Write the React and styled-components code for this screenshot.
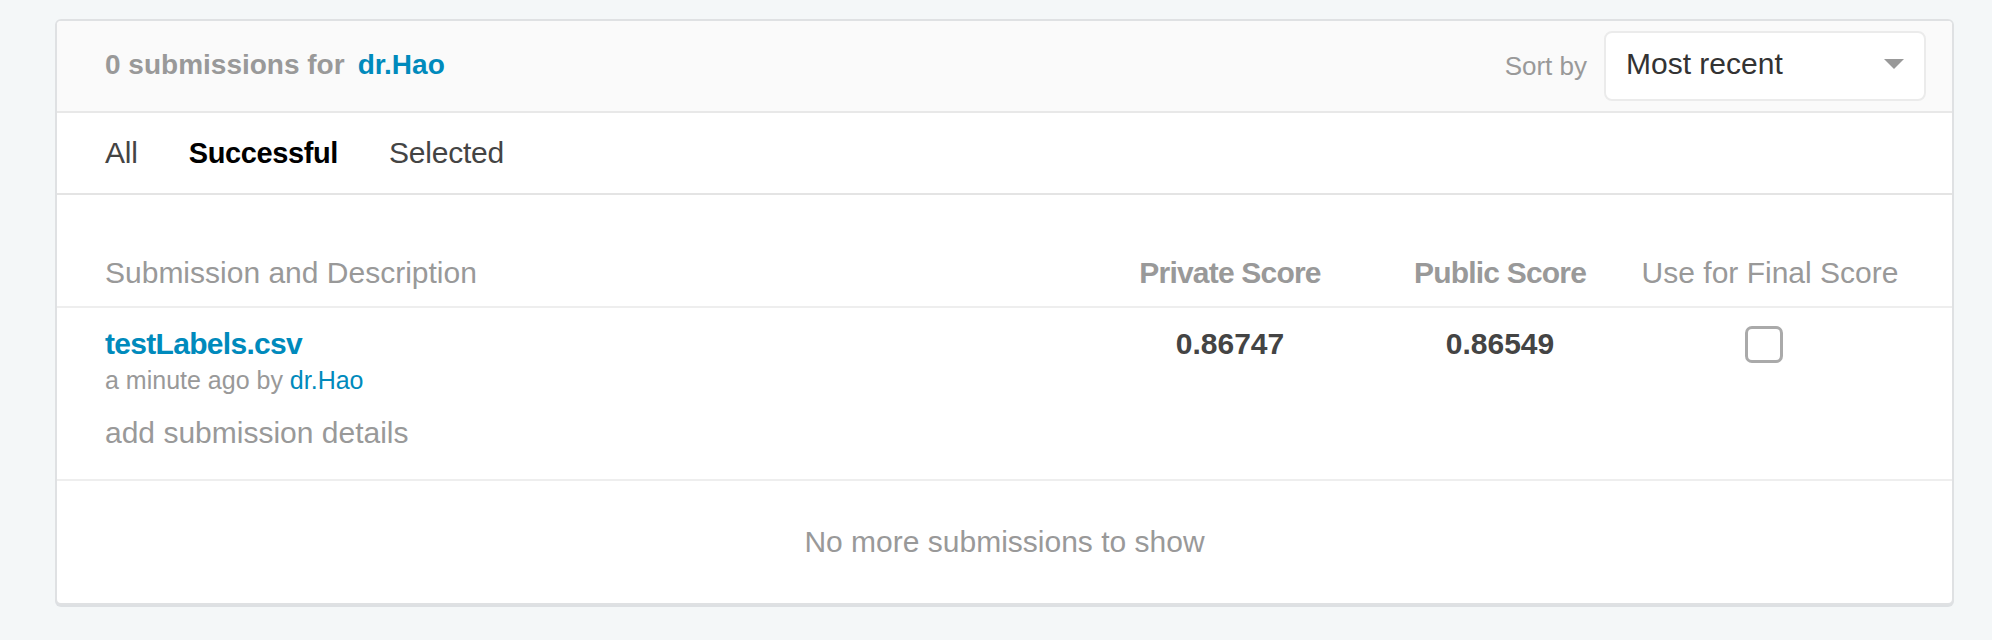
import React from "react";
import styled, { createGlobalStyle } from "styled-components";

const GlobalStyle = createGlobalStyle`
  html, body {
    margin: 0;
    padding: 0;
    background: #f4f7f8;
    font-family: "Liberation Sans", Arial, sans-serif;
  }
`;

const Page = styled.div`
  padding: 19px 38px 34px 55px;
`;

const Card = styled.section`
  background: #ffffff;
  border: 2px solid #dfe1e3;
  border-radius: 6px;
  box-shadow: 0 2px 0 #dde0e3;
  overflow: hidden;
`;

const Header = styled.header`
  display: flex;
  align-items: center;
  justify-content: space-between;
  height: 90px;
  padding: 0 26px 0 48px;
  background: #fafafa;
  border-bottom: 2px solid #e8e8e8;
`;

const Title = styled.h2`
  margin: 0 0 2px;
  font-size: 28px;
  font-weight: 700;
  color: #999999;
`;

const Link = styled.a`
  color: #008abc;
  text-decoration: none;
  font-weight: ${(p) => (p.$bold ? 700 : 400)};
  margin-left: ${(p) => p.$gap || 0}px;
`;

const SortGroup = styled.div`
  display: flex;
  align-items: center;
  gap: 17px;
`;

const SortLabel = styled.span`
  font-size: 26px;
  color: #999999;
`;

const Select = styled.div`
  box-sizing: border-box;
  width: 322px;
  height: 70px;
  display: flex;
  align-items: center;
  justify-content: space-between;
  padding: 0 20px 4px 20px;
  background: #ffffff;
  border: 2px solid #ebebeb;
  border-radius: 8px;
  font-size: 30px;
  color: #333333;
`;

const Tabs = styled.nav`
  display: flex;
  align-items: center;
  gap: 51px;
  height: 80px;
  padding: 0 48px;
  border-bottom: 2px solid #e4e4e4;
`;

const Tab = styled.span`
  font-size: ${(p) => (p.$active ? "29px" : "30px")};
  font-weight: ${(p) => (p.$active ? 700 : 400)};
  letter-spacing: ${(p) => (p.$active ? "-0.4px" : "-0.2px")};
  color: ${(p) => (p.$active ? "#000000" : "#444444")};
`;

const Grid = styled.div`
  display: grid;
  grid-template-columns: 1fr 270px 270px 270px;
  padding: ${(p) => p.$pad};
  border-bottom: 2px solid #eeeeee;
`;

const HeadCell = styled.div`
  font-size: 30px;
  line-height: 36px;
  color: #999999;
  text-align: ${(p) => (p.$center ? "center" : "left")};
  font-weight: ${(p) => (p.$bold ? 700 : 400)};
  letter-spacing: ${(p) => (p.$bold ? "-0.8px" : "0")};
`;

const SubmissionCell = styled.div`
  display: flex;
  flex-direction: column;
`;

const FileName = styled.a`
  font-size: 30px;
  line-height: 36px;
  font-weight: 700;
  letter-spacing: -0.7px;
  color: #008abc;
  text-decoration: none;
`;

const Meta = styled.div`
  margin-top: 3px;
  font-size: 25px;
  line-height: 30px;
  color: #999999;
`;

const Details = styled.div`
  margin-top: 20px;
  font-size: 30px;
  line-height: 36px;
  color: #999999;
`;

const Score = styled.div`
  font-size: 30px;
  line-height: 36px;
  font-weight: 700;
  color: #444444;
  text-align: center;
`;

const CheckCell = styled.div`
  display: flex;
  justify-content: center;
  align-items: center;
  height: 36px;
  padding-right: 12px;
`;

const Checkbox = styled.span`
  box-sizing: border-box;
  width: 38px;
  height: 37px;
  border: 3px solid #aaaaaa;
  border-radius: 7px;
  background: #ffffff;
`;

const Footer = styled.div`
  height: 122px;
  display: flex;
  align-items: center;
  justify-content: center;
  font-size: 30px;
  color: #999999;
`;

const Caret = () => (
  <svg width="20" height="10" viewBox="0 0 20 10" aria-hidden="true">
    <polygon points="0,0 20,0 10,10" fill="#999999" />
  </svg>
);

export default function App() {
  return (
    <>
      <GlobalStyle />
      <Page>
        <Card>
          <Header>
            <Title>
              0 submissions for
              <Link $bold $gap={13}>dr.Hao</Link>
            </Title>
            <SortGroup>
              <SortLabel>Sort by</SortLabel>
              <Select>
                <span>Most recent</span>
                <Caret />
              </Select>
            </SortGroup>
          </Header>
          <Tabs>
            <Tab>All</Tab>
            <Tab $active>Successful</Tab>
            <Tab>Selected</Tab>
          </Tabs>
          <Grid $pad="60px 47px 15px 48px">
            <HeadCell>Submission and Description</HeadCell>
            <HeadCell $center $bold>Private Score</HeadCell>
            <HeadCell $center $bold>Public Score</HeadCell>
            <HeadCell $center>Use for Final Score</HeadCell>
          </Grid>
          <Grid $pad="18px 47px 28px 48px">
            <SubmissionCell>
              <FileName>testLabels.csv</FileName>
              <Meta>
                a minute ago by <Link>dr.Hao</Link>
              </Meta>
              <Details>add submission details</Details>
            </SubmissionCell>
            <Score>0.86747</Score>
            <Score>0.86549</Score>
            <CheckCell>
              <Checkbox />
            </CheckCell>
          </Grid>
          <Footer>No more submissions to show</Footer>
        </Card>
      </Page>
    </>
  );
}
